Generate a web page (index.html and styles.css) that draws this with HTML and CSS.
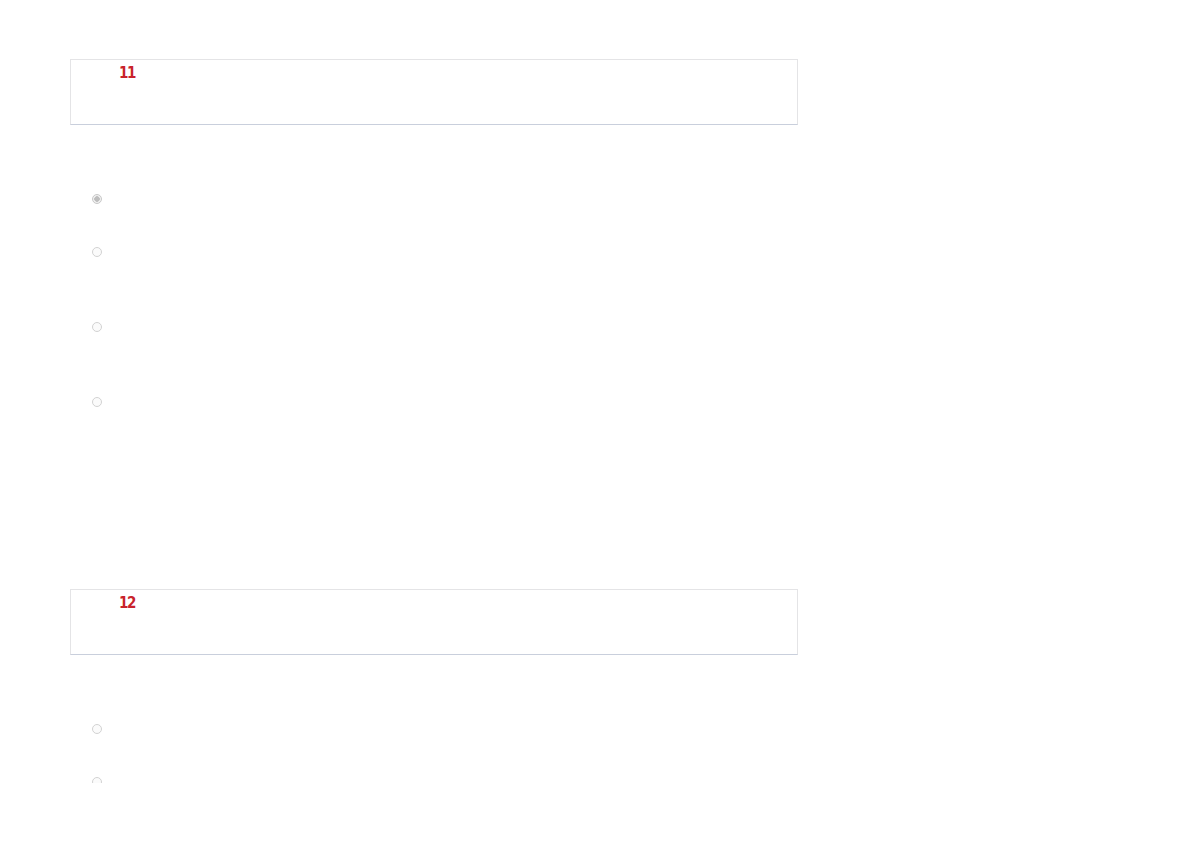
FILE: index.html
```html
<!DOCTYPE html>
<html lang="en">
<head>
    <meta charset="UTF-8">
    <meta name="viewport" content="width=device-width, initial-scale=1.0">
    <title>Quiz</title>
    <link rel="stylesheet" href="styles.css">
</head>
<body>
    <div class="quiz">
        <div class="question">
            <div class="question-box">
                <span class="number">11</span>
            </div>
            <ul class="options">
                <li class="option"><input type="radio" name="q11" checked disabled></li>
                <li class="option tall"><input type="radio" name="q11"></li>
                <li class="option tall"><input type="radio" name="q11"></li>
                <li class="option tall"><input type="radio" name="q11"></li>
            </ul>
        </div>

        <div class="question">
            <div class="question-box">
                <span class="number">12</span>
            </div>
            <ul class="options">
                <li class="option"><input type="radio" name="q12"></li>
                <li class="option"><input type="radio" name="q12"></li>
                <li class="option"><input type="radio" name="q12"></li>
            </ul>
        </div>
    </div>
</body>
</html>
```

FILE: styles.css
```css
body {
    margin: 0;
    font-family: Roboto, "Liberation Sans", sans-serif;
    background-color: #ffffff;
}
.quiz {
    width: 728px;
    height: 724px;
    padding: 59px 0 0 70px;
    overflow: hidden;
}
.question {
    margin-bottom: 117px;
}
.question-box {
    box-sizing: border-box;
    height: 66px;
    padding: 3px 0 0 48px;
    border: 1px solid #e4e4e6;
    border-bottom-color: #c9cfdc;
}
.number {
    font-family: "DejaVu Sans Condensed", "DejaVu Sans", sans-serif;
    font-size: 15px;
    line-height: 18px;
    font-weight: bold;
    letter-spacing: -1.5px;
    color: #c9232b;
}
.options {
    list-style: none;
    margin: 0;
    padding: 69px 0 0 22px;
}
.option {
    height: 53px;
}
.option.tall {
    height: 75px;
}
.option input {
    appearance: none;
    box-sizing: border-box;
    display: block;
    width: 10px;
    height: 10px;
    margin: 0;
    border: 1px solid #d2d2d2;
    border-radius: 50%;
    background: #fbfbfb;
}
.option input:checked {
    background: radial-gradient(circle, #bdbdbd 0 2.5px, #f0f0f0 3px);
    border-color: #c8c8c8;
}
```
